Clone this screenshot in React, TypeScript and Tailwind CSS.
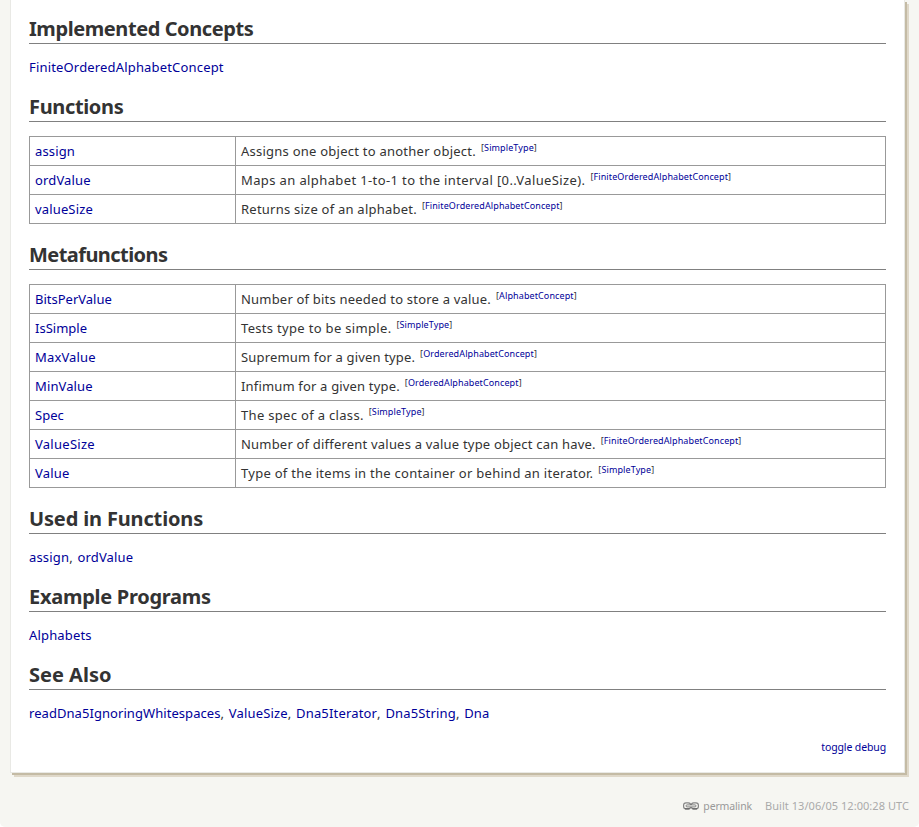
import React from "react";

type Row = { name: string; text: string; from: string; nameTrack?: string; textTrack: string };

const functions: Row[] = [
  { name: "assign", text: "Assigns one object to another object.", from: "SimpleType", nameTrack: "tracking-[0.15px]", textTrack: "tracking-[0.24px]" },
  { name: "ordValue", text: "Maps an alphabet 1-to-1 to the interval [0..ValueSize).", from: "FiniteOrderedAlphabetConcept", nameTrack: "tracking-[0.15px]", textTrack: "tracking-[0.38px]" },
  { name: "valueSize", text: "Returns size of an alphabet.", from: "FiniteOrderedAlphabetConcept", nameTrack: "tracking-[0.15px]", textTrack: "tracking-[0.23px]" },
];

const metafunctions: Row[] = [
  { name: "BitsPerValue", text: "Number of bits needed to store a value.", from: "AlphabetConcept", textTrack: "tracking-[0.2px]" },
  { name: "IsSimple", text: "Tests type to be simple.", from: "SimpleType", textTrack: "tracking-[0.32px]" },
  { name: "MaxValue", text: "Supremum for a given type.", from: "OrderedAlphabetConcept", nameTrack: "tracking-[0.15px]", textTrack: "tracking-[0.16px]" },
  { name: "MinValue", text: "Infimum for a given type.", from: "OrderedAlphabetConcept", nameTrack: "tracking-[0.12px]", textTrack: "tracking-[0.17px]" },
  { name: "Spec", text: "The spec of a class.", from: "SimpleType", textTrack: "tracking-[0.32px]" },
  { name: "ValueSize", text: "Number of different values a value type object can have.", from: "FiniteOrderedAlphabetConcept", nameTrack: "tracking-[0.27px]", textTrack: "tracking-[0.2px]" },
  { name: "Value", text: "Type of the items in the container or behind an iterator.", from: "SimpleType", nameTrack: "tracking-[0.2px]", textTrack: "tracking-[0.27px]" },
];

function Heading({ children, track = "" }: { children: string; track?: string }) {
  return (
    <h2 className={`h-[30px] border-b border-[#808080] text-[20px] leading-[30px] font-bold whitespace-nowrap text-[#333] ${track}`}>
      {children}
    </h2>
  );
}

function Link({ children, track = "" }: { children: string; track?: string }) {
  return <a className={`text-[#000099] ${track}`}>{children}</a>;
}

function Links({ names }: { names: string[] }) {
  return (
    <p className="mt-[13px] mb-[15px] h-[20px] leading-[20px] whitespace-nowrap">
      {names.map((n, i) => (
        <React.Fragment key={n}>
          {i > 0 && <span className="tracking-[0.7px]">{", "}</span>}
          <Link track={n.length === 27 ? "tracking-[0.06px]" : "tracking-[0.17px]"}>{n}</Link>
        </React.Fragment>
      ))}
    </p>
  );
}

function Table({ rows }: { rows: Row[] }) {
  return (
    <div className="mt-[14px] mb-[16px] border-t border-l border-[#999]">
      {rows.map((r) => (
        <div key={r.name} className="flex h-[29px] leading-[28px] whitespace-nowrap">
          <div className="w-[206px] border-r border-b border-[#999] pl-[5px]">
            <Link track={r.nameTrack}>{r.name}</Link>
          </div>
          <div className="flex flex-1 border-r border-b border-[#999] pl-[5px]">
            <span className={r.textTrack}>{r.text}</span>
            <span className="ml-[5px] text-[9px] leading-[22px] tracking-[0.11px]">
              [<Link>{r.from}</Link>]
            </span>
          </div>
        </div>
      ))}
    </div>
  );
}

export default function App() {
  return (
    <div className="h-[827px] overflow-hidden rounded-b-[5px] bg-[#f6f6f2] pl-[10px] font-['Noto_Sans',sans-serif] text-[13px] text-[#333]">
      <main className="h-[773px] w-[895px] border-x border-b border-[#e9e9e5] bg-white pt-[14px] pr-[18px] pl-[18px] shadow-[2px_2px_0_#c4bba5,4px_4px_0_#dfd8c9]">
        <Heading track="tracking-[-0.42px]">Implemented Concepts</Heading>
        <Links names={["FiniteOrderedAlphabetConcept"]} />
        <Heading track="tracking-[-0.35px]">Functions</Heading>
        <Table rows={functions} />
        <Heading track="tracking-[-0.56px]">Metafunctions</Heading>
        <Table rows={metafunctions} />
        <Heading track="tracking-[-0.15px]">Used in Functions</Heading>
        <Links names={["assign", "ordValue"]} />
        <Heading track="tracking-[-0.27px]">Example Programs</Heading>
        <Links names={["Alphabets"]} />
        <Heading>See Also</Heading>
        <Links names={["readDna5IgnoringWhitespaces", "ValueSize", "Dna5Iterator", "Dna5String", "Dna"]} />
        <div className="-mt-px text-right text-[10.5px] leading-[20px]">
          <Link track="tracking-[-0.12px]">toggle debug</Link>
        </div>
      </main>
      <footer className="mt-[23px] flex h-[20px] items-center justify-end pr-[10px] text-[11px] leading-[20px] text-[#aaa]">
        <svg width="16" height="8" viewBox="0 0 16 8" fill="none" className="mr-[4px]">
          <rect x="0.6" y="0.9" width="7.1" height="6" rx="2.4" stroke="#858585" strokeWidth="1.2" />
          <rect x="8.3" y="0.9" width="7.1" height="6" rx="2.4" stroke="#858585" strokeWidth="1.2" />
          <path d="M2 6.9h4.5M9.5 6.9h4.5" stroke="#555" strokeWidth="1" />
          <rect x="3" y="2.9" width="10" height="2" rx="1" fill="#f6f6f2" stroke="#777" strokeWidth="0.9" />
        </svg>
        <span className="mr-[13px] text-[10.5px] tracking-[-0.14px] text-[#999]">permalink</span>
        <span className="tracking-[0.05px]">Built 13/06/05 12:00:28 UTC</span>
      </footer>
    </div>
  );
}
